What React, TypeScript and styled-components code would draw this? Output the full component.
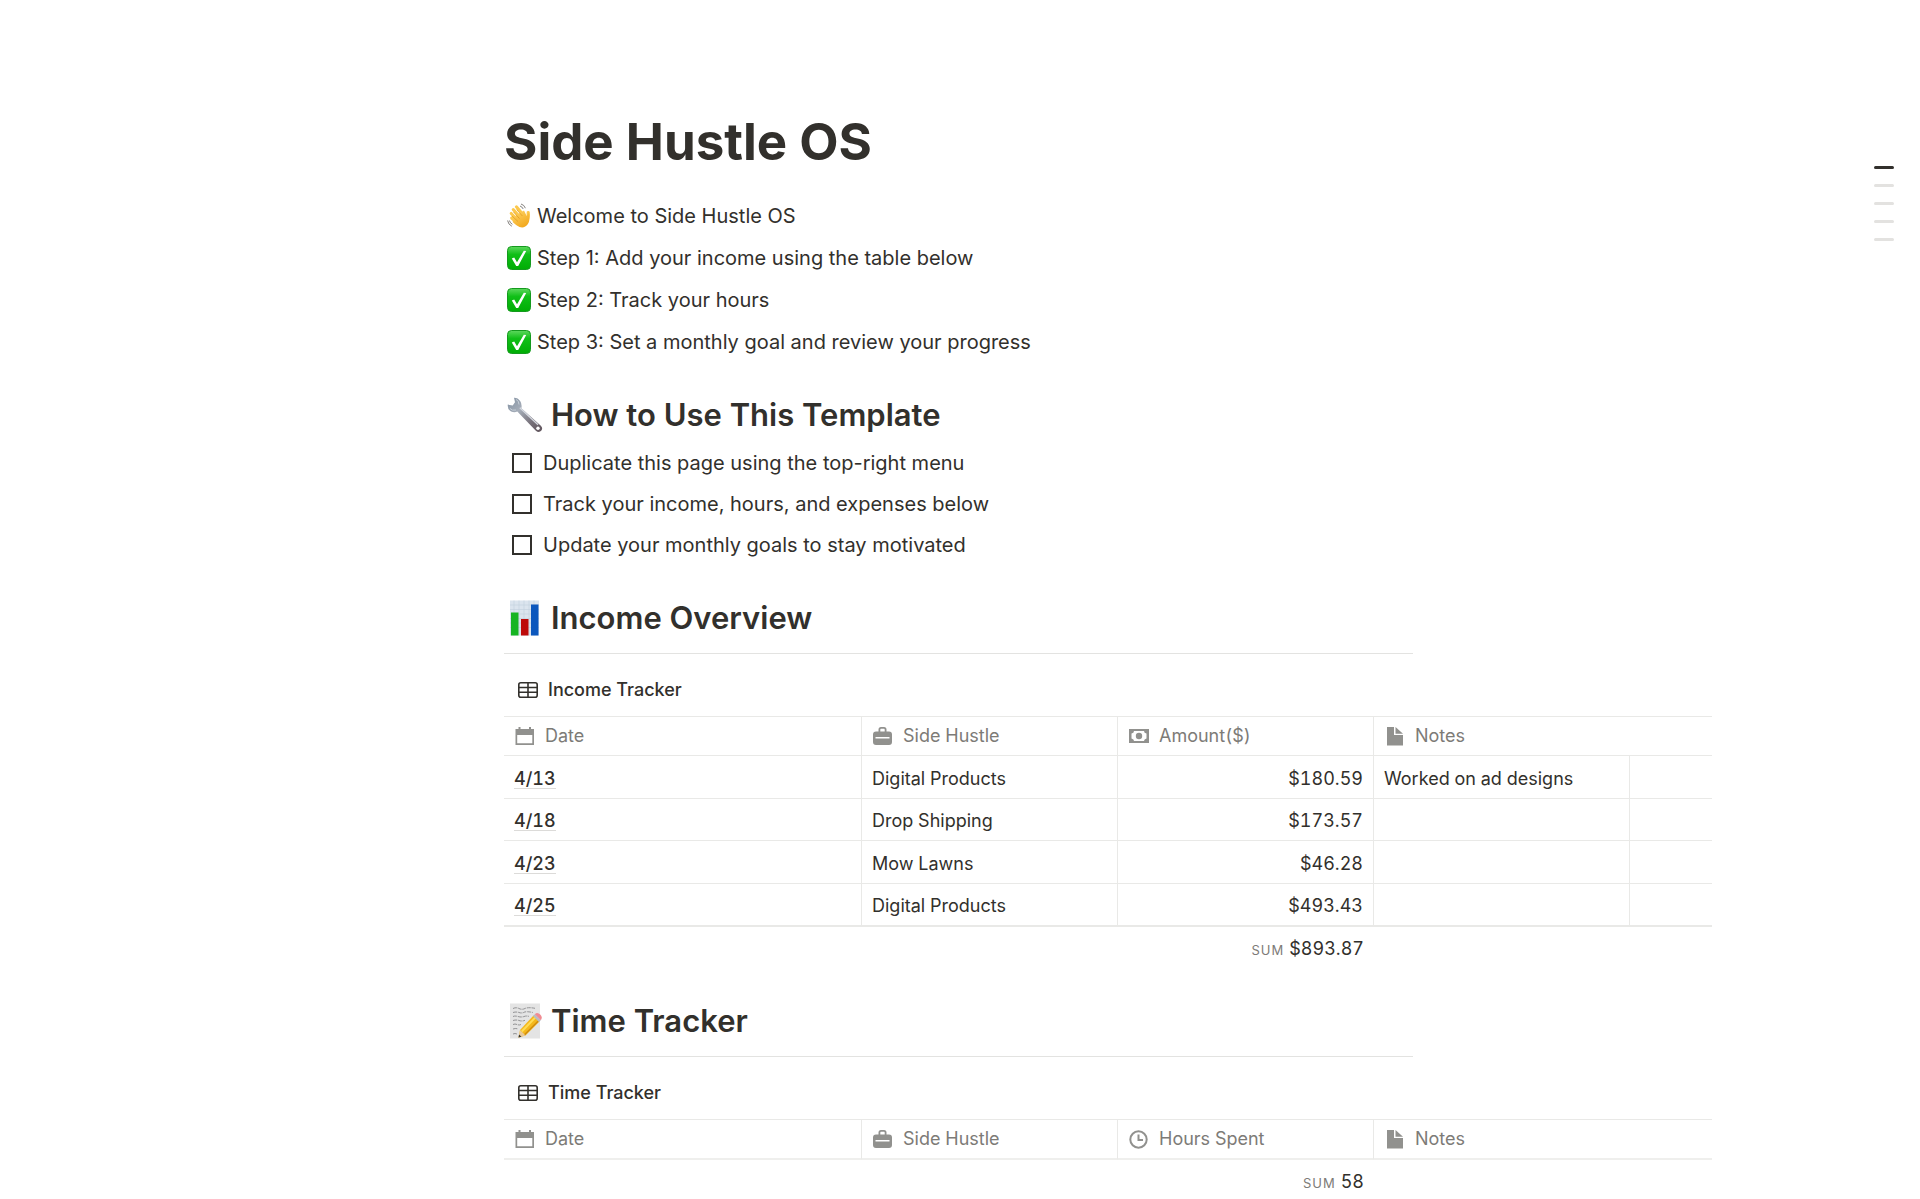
import React from "react";
import styled, { createGlobalStyle } from "styled-components";

const GlobalStyle = createGlobalStyle`
  *, *::before, *::after { box-sizing: border-box; }
  body {
    margin: 0;
    background: #fff;
    color: #32302c;
    font-family: Inter, "Liberation Sans", sans-serif;
    font-size: 20px;
  }
`;

const Page = styled.main`
  padding: 111px 208px 0 26.25vw;
`;

const Column = styled.div`
  max-width: 909px;
`;

const Title = styled.h1`
  margin: 0;
  font-size: 51px;
  line-height: 62px;
  font-weight: 700;
`;

const Intro = styled.div`
  display: flex;
  flex-direction: column;
  gap: 10px;
  margin-top: 27px;
`;

const Line = styled.p`
  display: flex;
  align-items: center;
  gap: 6px;
  margin: 0;
  padding-left: 3px;
  line-height: 32px;
`;

const Heading = styled.h2`
  display: flex;
  align-items: center;
  gap: 8px;
  margin: 36px 0 0;
  padding-left: 3px;
  font-size: 31px;
  line-height: 41px;
  font-weight: 600;
`;

const TodoList = styled.ul`
  display: flex;
  flex-direction: column;
  gap: 9px;
  margin: 12px 0 0;
  padding: 0 0 0 8px;
  list-style: none;
`;

const Todo = styled.label`
  display: flex;
  align-items: center;
  gap: 11px;
  line-height: 32px;
`;

const Box = styled.input`
  appearance: none;
  width: 20px;
  height: 20px;
  margin: 0;
  border: 2px solid #32302c;
  background: #fff;
  &:checked { background: #2383e2; }
`;

const Rule = styled.hr`
  height: 1px;
  margin: 15px 0 0;
  border: 0;
  background: #e3e3e1;
`;

const ViewTab = styled.button`
  display: flex;
  align-items: center;
  gap: 10px;
  margin: 20px 0 0;
  padding: 0 14px;
  height: 32px;
  border: 0;
  background: none;
  color: #32302c;
  font: 500 18px/32px Inter, "Liberation Sans", sans-serif;
`;

const Table = styled.table`
  width: 100%;
  margin-top: 10px;
  border-collapse: separate;
  border-spacing: 0;
  table-layout: fixed;
  font-size: 18px;
  font-variant-numeric: tabular-nums;
`;

const Col = styled.col<{ $width?: number }>`
  width: ${(p) => (p.$width ? `${p.$width}px` : "auto")};
`;

const Th = styled.th<{ $last?: boolean; $thick?: boolean }>`
  height: ${(p) => (p.$thick ? 41 : 40)}px;
  padding: 0 11px;
  border-top: 1px solid #e9e9e7;
  border-bottom: ${(p) => (p.$thick ? "2px solid #efefed" : "1px solid #e9e9e7")};
  border-right: ${(p) => (p.$last ? "0" : "1px solid #e9e9e7")};
  color: #7d7b77;
  font-weight: 400;
  text-align: left;
`;

const HeadLabel = styled.span`
  display: flex;
  align-items: center;
  gap: 10px;
  line-height: 24px;
`;

const Td = styled.td<{ $end?: boolean; $last?: boolean; $foot?: boolean }>`
  height: 43px;
  padding: 3px 10px 0;
  border-bottom: ${(p) => (p.$foot ? "2px" : "1px")} solid #e9e9e7;
  border-right: ${(p) => (p.$last ? "0" : "1px solid #e9e9e7")};
  line-height: 24px;
  text-align: ${(p) => (p.$end ? "right" : "left")};
  tr:nth-child(4n + 2) > & { height: 42px; }
`;

const DateLink = styled.a`
  display: inline-block;
  border-bottom: 1px solid #dcdbd9;
  color: inherit;
  font-weight: 500;
  line-height: 18px;
  text-decoration: none;
`;

const SumCell = styled.td`
  padding: 10px 10px 2px;
  line-height: 24px;
  text-align: right;
  white-space: nowrap;
`;

const SumLabel = styled.span`
  margin-right: 5px;
  color: #7d7b77;
  font-size: 13px;
  letter-spacing: 1px;
`;

const Outline = styled.nav`
  position: fixed;
  top: 166px;
  right: 26px;
  display: flex;
  flex-direction: column;
  gap: 15px;
`;

const Mark = styled.a<{ $active?: boolean }>`
  width: 20px;
  height: 3px;
  border-radius: 2px;
  background: ${(p) => (p.$active ? "#32302c" : "#e3e2e0")};
`;

const Wave = () => (
  <svg width="24" height="26" viewBox="0 0 24 26" aria-hidden="true">
    <defs>
      <linearGradient id="skin" x1="0" y1="0" x2="0.6" y2="1">
        <stop offset="0" stopColor="#ffd668" />
        <stop offset="1" stopColor="#f2a91f" />
      </linearGradient>
    </defs>
    <g stroke="#fcc84c" strokeLinecap="round" fill="none">
      <path d="M6.200 6.500l8 9M9.400 3.800l7.600 9M4.200 10.400l8 8.600M4.600 15l7 6" strokeWidth="3" />
      <path d="M21.200 9.500q.8 5-1.800 8" strokeWidth="3.200" />
    </g>
    <path d="M8 13l9-5.500 2.700 5.500 2-3.500q2 7-.8 11.500-3.400 4.800-8.400 3-3-1.200-6.900-5z" fill="url(#skin)" />
    <path d="M6.500 9l6 6.600M9.600 6.500l5.800 6.500M5 13l6 5.500" stroke="#dd981f" strokeWidth=".7" fill="none" />
    <path d="M14 1q3.200.8 4.400 4.200M13 3q2.200.6 3.200 3M.6 17.500q.6 4 4.200 5.700M2.400 17.500q.6 2.600 3 3.800" stroke="#77746f" strokeWidth=".9" fill="none" />
  </svg>
);

const Check = () => (
  <svg width="24" height="26" viewBox="0 0 24 26" aria-hidden="true">
    <defs>
      <linearGradient id="green" x1="0" y1="0" x2="0" y2="1">
        <stop offset="0" stopColor="#5ed85e" />
        <stop offset=".35" stopColor="#10bf17" />
        <stop offset="1" stopColor="#00ad05" />
      </linearGradient>
    </defs>
    <rect x=".5" y="1.500" width="23" height="23" rx="4" fill="url(#green)" stroke="#159a1e" />
    <path d="M4.800 13.500l2.400-.9 2.800 4.700 6.800-11.500 2.400.2-8 15h-2z" fill="#fff" />
  </svg>
);

const Wrench = () => (
  <svg width="36" height="36" viewBox="0 0 36 36" aria-hidden="true">
    <defs>
      <linearGradient id="steel" x1="0" y1="0" x2="1" y2="1">
        <stop offset="0" stopColor="#8291a2" />
        <stop offset=".35" stopColor="#a6aeb9" />
        <stop offset=".7" stopColor="#77717a" />
        <stop offset="1" stopColor="#5f535a" />
      </linearGradient>
    </defs>
    <path
      d="M7 .8l1 4.400-2.300 3.300-4.900-.9q-.6 4.800 3.300 6.800 3 1.400 6.200.2l18.300 18.800q3.200 2.800 5.600.4 2.200-2.800-.6-5.400L14.400 11.200q.8-4-1.100-7Q10.800.7 7 .8z"
      fill="url(#steel)"
    />
    <path d="M12.800 10.800l18.200 17" stroke="#d5d9e0" strokeWidth="1.300" />
    <path d="M3 11.500q2 2.500 6 1.500M9 2.500q3 1 3 5" stroke="#c6ced7" strokeWidth="1" fill="none" />
    <circle cx="31" cy="31.200" r="1.700" fill="#fff" />
  </svg>
);

const Bars = () => (
  <svg width="36" height="36" viewBox="0 0 36 36" aria-hidden="true">
    <rect x="3" y=".5" width="29" height="35" fill="#dbe4ee" />
    <path d="M3 5h29M3 9.500h29M3 14h29M3 18.500h29M3 23h29M3 27.500h29M7 .5v35M12 .5v35M17 .5v35M22 .5v35M27 .5v35" stroke="#c3d0de" strokeWidth=".6" />
    <rect x="4" y="12.500" width="7.500" height="23" fill="#16b422" />
    <rect x="14" y="19" width="7.500" height="16.500" fill="#bd0a0a" />
    <rect x="24" y="4.500" width="7.500" height="31" fill="#0c57bd" />
  </svg>
);

const Memo = () => (
  <svg width="36" height="36" viewBox="0 0 36 36" aria-hidden="true">
    <rect x="3" y=".5" width="30" height="35" fill="#e4e4e4" />
    <path d="M6 5.500q3-1.500 6 0t6 0 10-.2M6 9.500q3-1 6 0t5-.2 9 .2M6 13.500q2-1 5 0t6 0 5 0M6 17.500q3-1 6 0t6-.2M6 21.500q2-1 4 0t4 0M6 26q3-1 5 0M6 31q2-1 4 0" stroke="#8a8a8c" strokeWidth=".9" strokeDasharray="4 .8" fill="none" />
    <path d="M11.500 34.500l1.500-7.500L26.500 12.500l6 6L18.500 32.500z" fill="#f4b81c" />
    <path d="M14.800 28.500L28.200 14.600" stroke="#ffdc55" strokeWidth="2" />
    <path d="M17.300 32L31.300 18" stroke="#cf8a10" strokeWidth="1.300" />
    <path d="M11.500 34.500l1.500-7.500 5.500 5.500z" fill="#e8c99a" />
    <path d="M11.500 34.500l.6-3 2.300 2.200z" fill="#333" />
    <path d="M26 13l1.800-1.800 6 6-1.800 1.800z" fill="#b8bcc2" />
    <path d="M27.800 11.200q2.600-2.400 5.400.4t.6 5.600z" fill="#f08b92" />
  </svg>
);

const GridIcon = () => (
  <svg width="20" height="16" viewBox="0 0 20 16" fill="none" stroke="#32302c" strokeWidth="1.600" aria-hidden="true">
    <rect x=".8" y=".8" width="18.400" height="14.400" rx="2" />
    <path d="M1 5.500h18M1 10.200h18M10 1v14" />
  </svg>
);

const CalendarIcon = () => (
  <svg width="20" height="20" viewBox="0 0 20 20" fill="#91918e" aria-hidden="true">
    <path fillRule="evenodd" d="M.5 3h3V1h2v2h8.500V1h2v2h3v16H.5zM2.200 9v8.300h15.100V9z" />
  </svg>
);

const CaseIcon = () => (
  <svg width="20" height="20" viewBox="0 0 20 20" fill="#91918e" aria-hidden="true">
    <path fillRule="evenodd" d="M5.500 5.500V3.500q0-2.500 2.500-2.500h3q2.500 0 2.500 2.500v2H16q3 0 3 3V11H0V8.500q0-3 3-3zM7.300 5.500h4.400v-2q0-.7-.7-.7H8q-.7 0-.7.7z" />
    <path d="M0 10.500h2.500v2h14v-2H19V16q0 3-3 3H3q-3 0-3-3z" />
  </svg>
);

const CashIcon = () => (
  <svg width="20" height="20" viewBox="0 0 20 20" fill="#91918e" aria-hidden="true">
    <path fillRule="evenodd" d="M0 3h20v14H0zM5 5q0 2-2.500 2.500v5Q5 13 5 15h10q0-2 2.500-2.500v-5Q15 7 15 5z" />
    <circle cx="10" cy="10" r="3.200" />
  </svg>
);

const NoteIcon = () => (
  <svg width="20" height="20" viewBox="0 0 20 20" fill="#91918e" aria-hidden="true">
    <path d="M2 1h7v8h9v10.500H2z" />
    <path d="M10.500 1l7.500 6.800H10.500z" />
  </svg>
);

const ClockIcon = () => (
  <svg width="20" height="20" viewBox="0 0 20 20" fill="none" stroke="#91918e" strokeWidth="2" aria-hidden="true">
    <circle cx="9.500" cy="10.500" r="8.200" />
    <path d="M9.500 5.500v5.500h4.500" />
  </svg>
);

type Row = { date: string; hustle: string; amount: string; notes: string };

const income: Row[] = [
  { date: "4/13", hustle: "Digital Products", amount: "$180.59", notes: "Worked on ad designs" },
  { date: "4/18", hustle: "Drop Shipping", amount: "$173.57", notes: "" },
  { date: "4/23", hustle: "Mow Lawns", amount: "$46.28", notes: "" },
  { date: "4/25", hustle: "Digital Products", amount: "$493.43", notes: "" },
];

const steps = [
  "Step 1: Add your income using the table below",
  "Step 2: Track your hours",
  "Step 3: Set a monthly goal and review your progress",
];

const todos = [
  "Duplicate this page using the top-right menu",
  "Track your income, hours, and expenses below",
  "Update your monthly goals to stay motivated",
];

type TrackerProps = { name: string; metric: string; metricIcon: React.ReactNode; rows: Row[]; sum: string };

const Tracker = ({ name, metric, metricIcon, rows, sum }: TrackerProps) => {
  const thick = rows.length === 0;
  return (
    <section>
      <ViewTab type="button"><GridIcon />{name}</ViewTab>
      <Table aria-label={name}>
        <colgroup>
          <Col $width={358} /><Col $width={256} /><Col $width={256} /><Col $width={256} /><Col />
        </colgroup>
        <thead>
          <tr>
            <Th $thick={thick}><HeadLabel><CalendarIcon />Date</HeadLabel></Th>
            <Th $thick={thick}><HeadLabel><CaseIcon />Side Hustle</HeadLabel></Th>
            <Th $thick={thick}><HeadLabel>{metricIcon}{metric}</HeadLabel></Th>
            <Th $thick={thick} $last colSpan={2}><HeadLabel><NoteIcon />Notes</HeadLabel></Th>
          </tr>
        </thead>
        <tbody>
          {rows.map((r, i) => {
            const foot = i === rows.length - 1;
            return (
              <tr key={r.date}>
                <Td $foot={foot}><DateLink href="#">{r.date}</DateLink></Td>
                <Td $foot={foot}>{r.hustle}</Td>
                <Td $foot={foot} $end>{r.amount}</Td>
                <Td $foot={foot}>{r.notes}</Td>
                <Td $foot={foot} $last />
              </tr>
            );
          })}
        </tbody>
        <tfoot>
          <tr>
            <SumCell colSpan={3}><SumLabel>SUM</SumLabel>{sum}</SumCell>
            <td colSpan={2} />
          </tr>
        </tfoot>
      </Table>
    </section>
  );
};

export default function App() {
  return (
    <>
      <GlobalStyle />
      <Page>
        <Column>
          <Title>Side Hustle OS</Title>
          <Intro>
            <Line><Wave />Welcome to Side Hustle OS</Line>
            {steps.map((s) => <Line key={s}><Check />{s}</Line>)}
          </Intro>
          <Heading><Wrench />How to Use This Template</Heading>
          <TodoList>
            {todos.map((t) => (
              <li key={t}><Todo><Box type="checkbox" />{t}</Todo></li>
            ))}
          </TodoList>
          <Heading><Bars />Income Overview</Heading>
          <Rule />
        </Column>
        <Tracker name="Income Tracker" metric="Amount($)" metricIcon={<CashIcon />} rows={income} sum="$893.87" />
        <Column>
          <Heading><Memo />Time Tracker</Heading>
          <Rule />
        </Column>
        <Tracker name="Time Tracker" metric="Hours Spent" metricIcon={<ClockIcon />} rows={[]} sum="58" />
      </Page>
      <Outline aria-label="Page outline">
        {[0, 1, 2, 3, 4].map((n) => (
          <Mark key={n} href="#" aria-label={`Section ${n + 1}`} $active={n === 0} />
        ))}
      </Outline>
    </>
  );
}
